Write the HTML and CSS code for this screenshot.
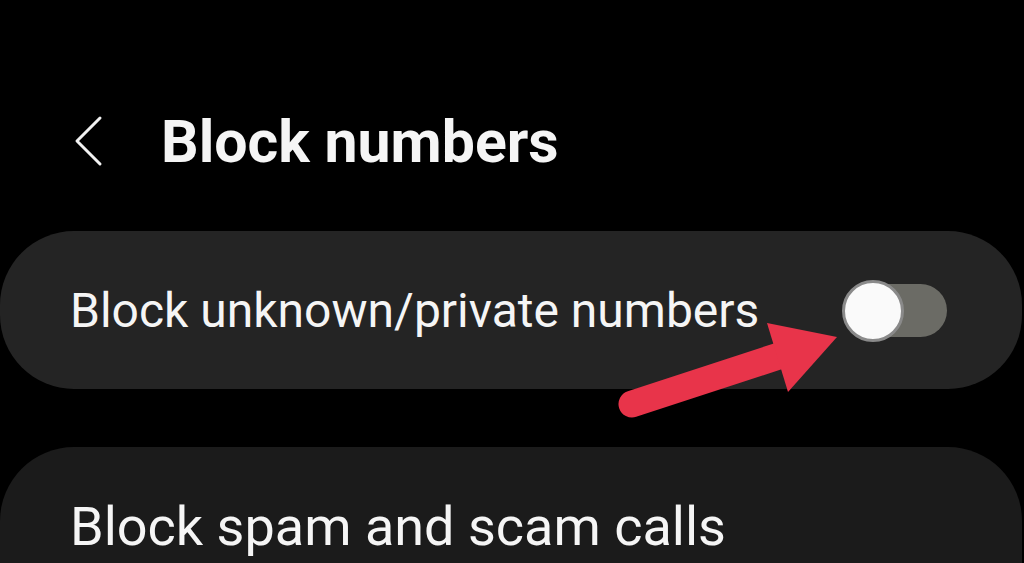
FILE: index.html
```html
<!DOCTYPE html>
<html lang="en">
<head>
  <meta charset="UTF-8">
  <meta name="viewport" content="width=device-width, initial-scale=1.0">
  <title>Block numbers</title>
  <link rel="stylesheet" href="styles.css">
</head>
<body>
  <header class="topbar">
    <svg class="back" width="30" height="52" viewBox="0 0 30 52">
      <polyline points="27,3 4,26 27,49" fill="none" stroke="#f2f2f2" stroke-width="3" stroke-linecap="round" stroke-linejoin="round"/>
    </svg>
    <h1>Block numbers</h1>
  </header>

  <div class="list">
    <div class="card card-first">
      <span class="label">Block unknown/private numbers</span>
      <div class="switch">
        <div class="knob"></div>
      </div>
    </div>

    <div class="card card-second">
      <span class="label label-big">Block spam and scam calls</span>
    </div>
  </div>

  <svg class="pointer" width="1024" height="563" viewBox="0 0 1024 563">
    <line x1="632" y1="404" x2="782" y2="355" stroke="#e8344a" stroke-width="27" stroke-linecap="round"/>
    <polygon points="767,323 837,337 788,392" fill="#e8344a"/>
  </svg>
</body>
</html>
```

FILE: styles.css
```css
body {
  font-family: Roboto, "Noto Sans", sans-serif;
  background-color: #000;
  color: #f5f5f5;
  margin: 0;
  padding: 0;
  height: 563px;
  overflow: hidden;
}
.topbar {
  display: flex;
  align-items: center;
  height: 120px;
  padding: 81px 0 0 73px;
}
.back {
  margin-right: 58px;
}
.topbar h1 {
  margin: 0;
  font-size: 59px;
  font-weight: 700;
  letter-spacing: 0;
}
.list {
  display: flex;
  flex-direction: column;
  gap: 58px;
  padding-top: 30px;
}
.card {
  display: flex;
  align-items: center;
  justify-content: space-between;
  width: 1022px;
  box-sizing: border-box;
  padding: 0 75px 0 70px;
  border-radius: 74px;
}
.card-first {
  height: 158px;
  background: #242424;
}
.card-second {
  height: 116px;
  background: #1b1b1b;
  align-items: flex-start;
  padding-top: 48px;
  border-radius: 74px 74px 0 0;
}
.label {
  font-size: 48px;
  font-weight: 400;
}
.label-big {
  font-size: 54px;
}
.switch {
  position: relative;
  width: 97px;
  height: 53px;
  border-radius: 27px;
  background: #6b6b65;
}
.knob {
  position: absolute;
  left: -8px;
  top: -4px;
  width: 56px;
  height: 56px;
  border-radius: 50%;
  background: #fafafa;
  border: 3px solid #8a8a8a;
}
.pointer {
  position: absolute;
  left: 0;
  top: 0;
}
```
